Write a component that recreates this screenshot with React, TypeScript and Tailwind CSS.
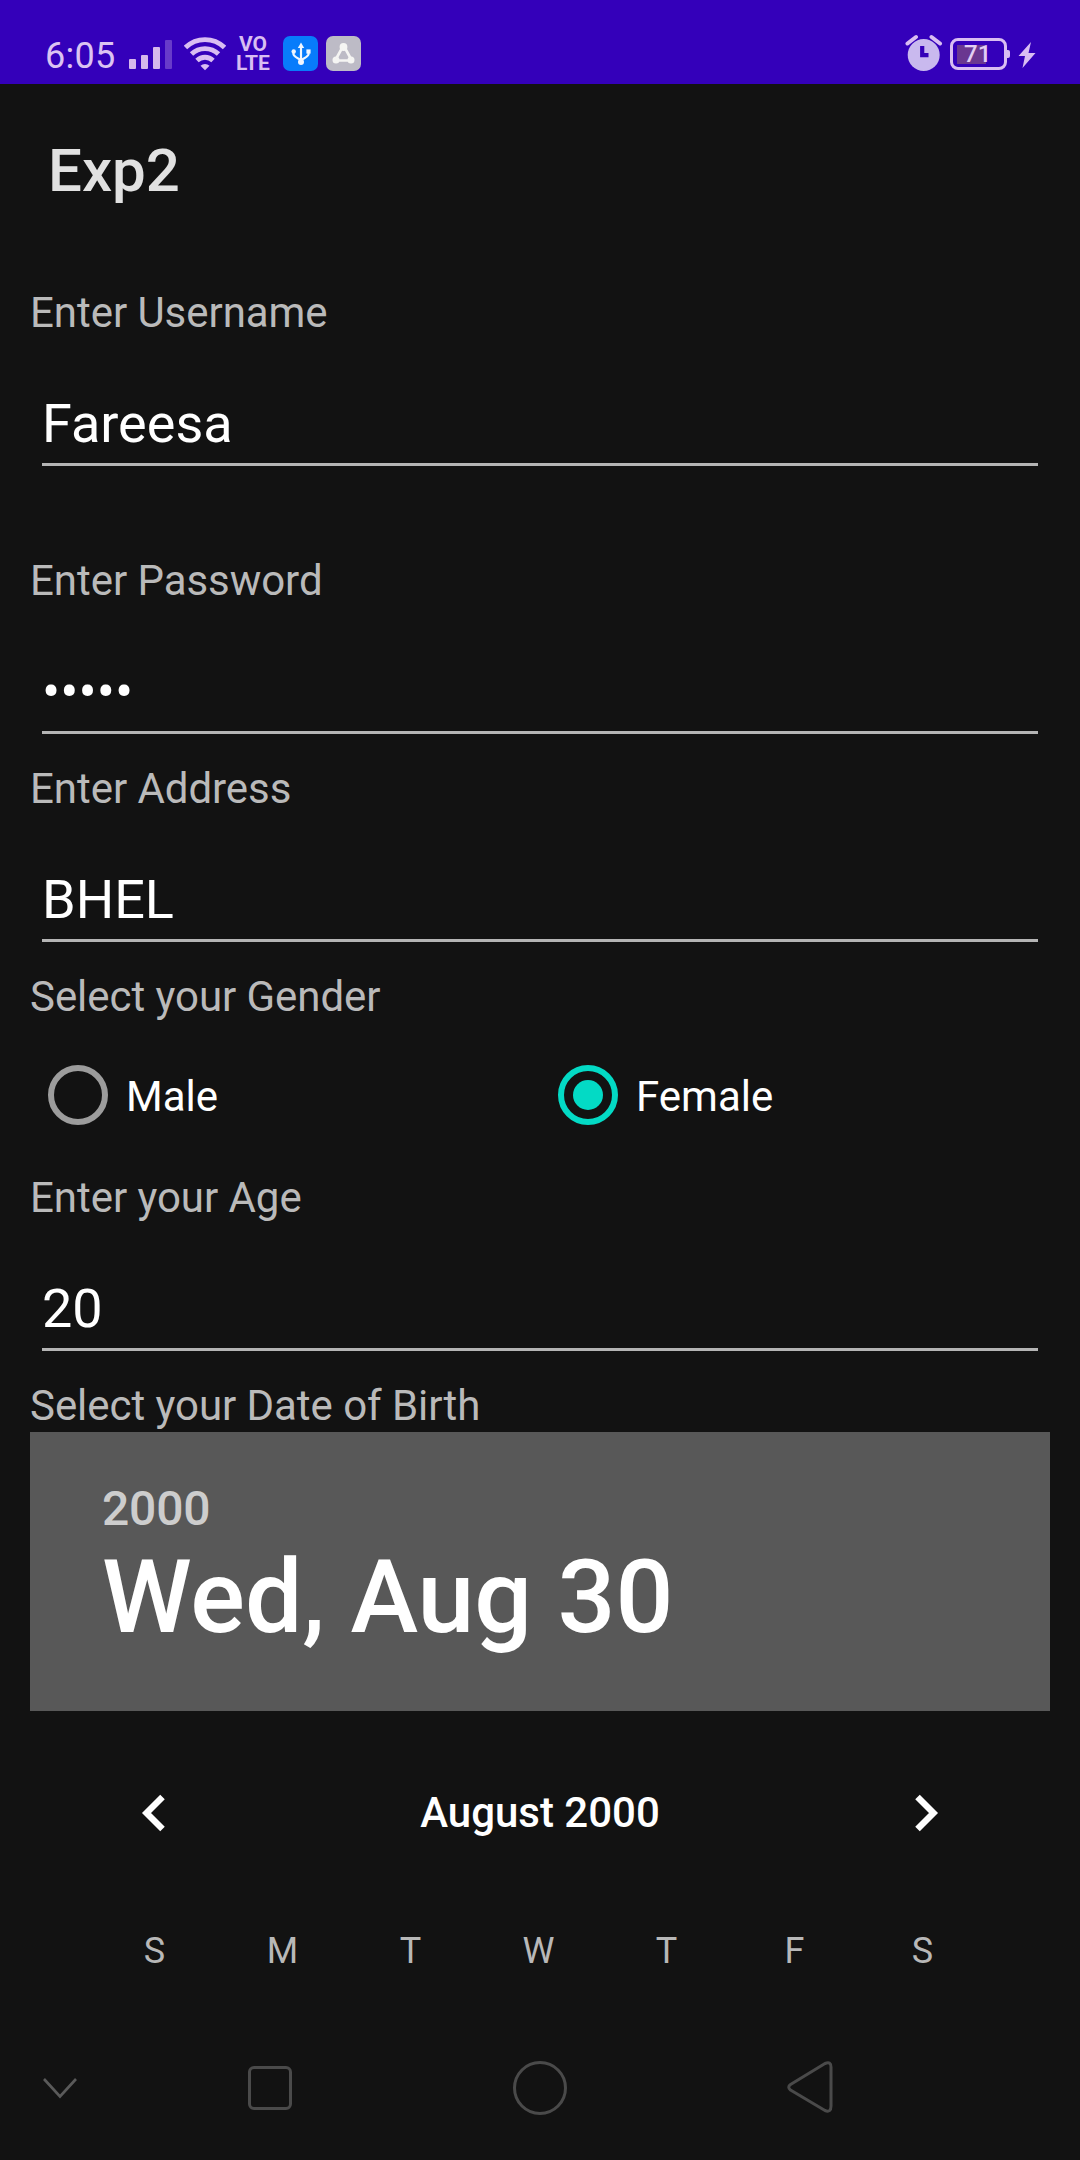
import type { ReactNode } from "react";

function SignalIcon() {
  return (
    <svg width="44" height="30" viewBox="0 0 44 30" fill="#d6b8ec">
      <rect x="0" y="20" width="7" height="10" rx="1" />
      <rect x="12" y="16" width="7" height="14" rx="1" />
      <rect x="24" y="8" width="7" height="22" rx="1" />
      <rect x="36" y="1" width="7" height="29" rx="1" opacity="0.32" />
    </svg>
  );
}

function WifiIcon() {
  return (
    <svg width="42" height="34" viewBox="0 0 42 34" fill="none" stroke="#d9bdf2" strokeWidth="4.8">
      <path d="M1.5 10.5 A28 28 0 0 1 40.5 10.5" />
      <path d="M7.5 17 A19.5 19.5 0 0 1 34.5 17" />
      <path d="M13 23.5 A11.5 11.5 0 0 1 29 23.5" />
      <path d="M16.5 28.8 A6.5 6.5 0 0 1 25.5 28.8 L21 33.2 Z" fill="#d9bdf2" stroke="none" />
    </svg>
  );
}

function UsbIcon() {
  return (
    <svg width="35" height="35" viewBox="0 0 35 35" fill="none" stroke="#f1f6ff" strokeWidth="2.2">
      <rect width="35" height="35" rx="7" fill="#087cfb" stroke="none" />
      <path d="M18 10 V26" />
      <path d="M10.5 15 V18.5 Q11 20.5 18 24 Q25 20.5 25.5 18.5 V15" />
      <path d="M18 6.5 L21.2 12 H14.8 Z" fill="#f1f6ff" stroke="none" />
      <circle cx="10.7" cy="15.5" r="2.2" fill="#f1f6ff" stroke="none" />
      <rect x="23.4" y="13.4" width="4.2" height="4.2" fill="#f1f6ff" stroke="none" />
      <circle cx="18" cy="26" r="3" fill="#f1f6ff" stroke="none" />
    </svg>
  );
}

function ShareIcon() {
  return (
    <svg width="35" height="35" viewBox="0 0 35 35" fill="none" stroke="#f5f5f3" strokeWidth="2.6">
      <rect width="35" height="35" rx="7" fill="#bdbbc6" stroke="none" />
      <path d="M15.5 13 L10 23 M19.5 13 L25 23 M13 24.5 H22" />
      <circle cx="17.5" cy="11" r="2.6" fill="#f5f5f3" />
      <circle cx="10" cy="24" r="2.2" fill="#f5f5f3" />
      <circle cx="25" cy="24" r="2.2" fill="#f5f5f3" />
    </svg>
  );
}

function AlarmIcon() {
  return (
    <svg width="38" height="38" viewBox="0 0 38 38" fill="none">
      <circle cx="18.7" cy="21" r="16" fill="#c9b9ee" />
      <path d="M2.5 9.5 L11 3 M35 9.5 L26.5 3" stroke="#d9bdf2" strokeWidth="4" strokeLinecap="round" />
      <path d="M17.2 12 V21.2 H23.5" stroke="#3502b8" strokeWidth="4.2" />
    </svg>
  );
}

function Battery() {
  return (
    <div className="flex items-center">
      <div className="flex h-[32px] w-[57px] items-center rounded-[8px] border-3 border-[#d9bdf2] p-[4px]">
        <div className="flex h-[19px] w-[29px] items-center justify-start bg-[#6a3790] pl-[7px] text-[24px] leading-[19px] font-medium text-[#e2cdf3]">
          71
        </div>
      </div>
      <div className="h-[8px] w-[3px] rounded-r-[2px] bg-[#d9bdf2]" />
    </div>
  );
}

function BoltIcon() {
  return (
    <svg width="18" height="26" viewBox="0 0 18 26" fill="#d9bdf2">
      <path d="M13 0 L0.5 14 H7 L4.5 26 L17.5 11 H10.5 Z" />
    </svg>
  );
}

function StatusBar() {
  return (
    <div className="flex h-[84px] shrink-0 items-start bg-[#3400ba] pr-[44px] pl-[45px]">
      <div className="mt-[36px] w-[84px] text-[36px] leading-[41px] tracking-[0.3px] text-[#dcc3f2]">6:05</div>
      <div className="mt-[39px]"><SignalIcon /></div>
      <div className="mt-[37px] ml-[11px]"><WifiIcon /></div>
      <div className="mt-[35px] ml-[10px] mr-px flex w-[34px] flex-col items-center text-[21px] leading-[18.5px] font-bold text-[#d9bdf2]">
        <span>VO</span>
        <span>LTE</span>
      </div>
      <div className="mt-[36px] ml-[12px]"><UsbIcon /></div>
      <div className="mt-[36px] ml-[8px]"><ShareIcon /></div>
      <div className="mt-[34px] ml-auto"><AlarmIcon /></div>
      <div className="mt-[38px] ml-[7px]"><Battery /></div>
      <div className="mt-[42px] ml-[8px]"><BoltIcon /></div>
    </div>
  );
}

function Label({ children }: { children: ReactNode }) {
  return <div className="h-[54px] text-[42px] leading-[54px] tracking-[-0.05px] text-[#bababa]">{children}</div>;
}

function Field({ value }: { value: string }) {
  return (
    <div className="mx-[12px] flex h-[126px] items-end border-b-3 border-[#b4b4b4] pb-[7px] text-[54px] leading-[65px] text-white">
      {value}
    </div>
  );
}

function Radio({ label, checked }: { label: string; checked?: boolean }) {
  return (
    <div className="flex flex-1 items-center pl-[18px]">
      {checked ? (
        <div className="flex size-[60px] items-center justify-center rounded-full border-6 border-[#03dac5]">
          <div className="size-[30px] rounded-full bg-[#03dac5]" />
        </div>
      ) : (
        <div className="size-[60px] rounded-full border-6 border-[#9c9c9c]" />
      )}
      <span className="mt-[3px] ml-[18px] text-[42px] leading-[54px] text-white">{label}</span>
    </div>
  );
}

function MonthArrow({ next }: { next?: boolean }) {
  return (
    <svg width="24" height="38" viewBox="0 0 24 38" fill="none" stroke="#fff" strokeWidth="6.4">
      <path d={next ? "M2.5 3 L18.5 19 L2.5 35" : "M21.5 3 L5.5 19 L21.5 35"} />
    </svg>
  );
}

function DatePicker() {
  return (
    <>
      <div className="h-[279px] bg-[#585858] pl-[72px] font-medium">
        <div className="pt-[49px] text-[48px] leading-[56px] tracking-[-0.2px] text-[#cdcdcd]">2000</div>
        <div className="text-[102px] leading-[120px] text-white">Wed, Aug 30</div>
      </div>
      <div className="mt-[74px] flex h-[56px] items-center justify-between px-[111px]">
        <MonthArrow />
        <span className="text-[42px] leading-[56px] font-medium text-white">August 2000</span>
        <MonthArrow next />
      </div>
      <div className="mt-[85px] ml-[60.5px] grid w-[896px] grid-cols-7 text-center text-[36px] leading-[50px] text-[#b8b8b8]">
        {["S", "M", "T", "W", "T", "F", "S"].map((day, i) => (
          <span key={i}>{day}</span>
        ))}
      </div>
    </>
  );
}

function NavBar() {
  return (
    <div className="mt-auto flex h-[144px] shrink-0 items-center">
      <svg width="248" height="60" viewBox="0 0 248 60" fill="none" stroke="#5a5a5a" strokeWidth="2.6">
        <path d="M44 21 L60 38.5 L76 21" />
      </svg>
      <div className="size-[44px] rounded-[6px] border-3 border-[#4a4a4a]" />
      <div className="ml-[221px] size-[54px] rounded-full border-3 border-[#4a4a4a]" />
      <svg className="ml-[219px]" width="50" height="60" viewBox="0 0 50 60" fill="none" stroke="#4a4a4a" strokeWidth="3" strokeLinejoin="round">
        <path d="M4.5 26.5 L39 5.5 Q45 3 45 9 V48 Q45 55 39 52.5 L4.5 32 Q1 29 4.5 26.5 Z" />
      </svg>
    </div>
  );
}

export default function App() {
  return (
    <div className="flex h-[2160px] w-[1080px] flex-col overflow-hidden bg-[#121212] font-['Roboto',sans-serif]">
      <StatusBar />
      <h1 className="h-[172px] pl-[48px] text-[60px] leading-[174px] font-medium text-[#e1e1e1]">Exp2</h1>
      <main className="px-[30px] pt-[30px]">
        <Label>Enter Username</Label>
        <Field value="Fareesa" />
        <div className="mt-[88px]"><Label>Enter Password</Label></div>
        <Field value="•••••" />
        <div className="mt-[28px]"><Label>Enter Address</Label></div>
        <Field value="BHEL" />
        <div className="mt-[28px]"><Label>Select your Gender</Label></div>
        <div className="mb-[5px] flex h-[142px]">
          <Radio label="Male" />
          <Radio label="Female" checked />
        </div>
        <Label>Enter your Age</Label>
        <Field value="20" />
        <div className="mt-[28px] -mb-px"><Label>Select your Date of Birth</Label></div>
        <DatePicker />
      </main>
      <NavBar />
    </div>
  );
}
